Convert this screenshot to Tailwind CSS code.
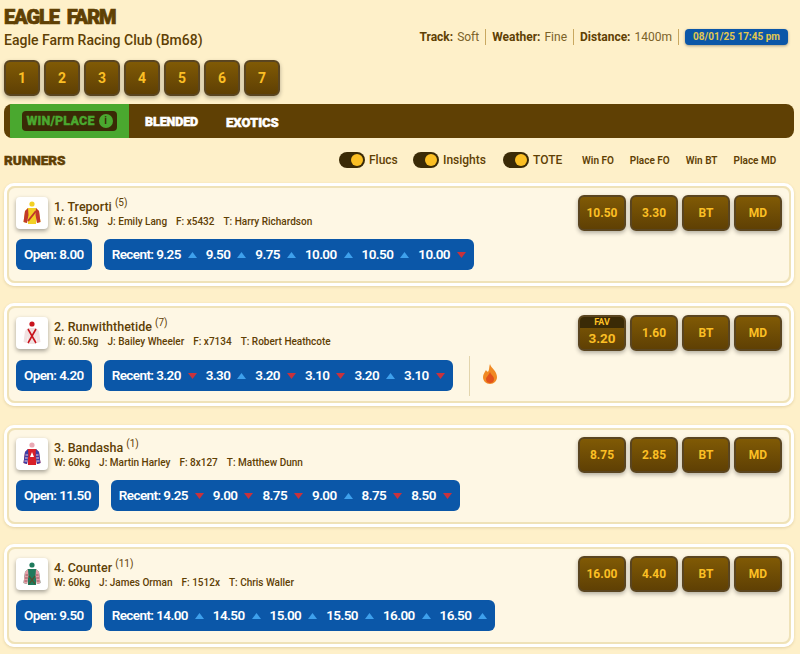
<!DOCTYPE html>
<html>
<head>
  <meta charset="utf-8" />
  <title>Eagle Farm</title>
  <script src="https://cdn.jsdelivr.net/npm/@tailwindcss/browser@4"></script>
</head>

<body class="bg-[#fef0c9] font-['Roboto',sans-serif] text-[#5f4004] overflow-hidden">
  <div class="w-[800px] h-[654px] overflow-hidden">

    <!-- Header -->
    <div class="flex justify-between pl-1 pr-3 pt-[6px]">
      <div>
        <h1 class="font-black text-[20px] leading-[22px] tracking-[-1.1px] [word-spacing:4px] [-webkit-text-stroke:0.7px_#5f4004]">EAGLE FARM</h1>
        <p class="mt-[2px] text-[14px] leading-5 font-medium">Eagle Farm Racing Club (Bm68)</p>
      </div>
      <div class="flex items-center h-4 mt-[23px] text-[12px]">
        <span class="font-bold">Track:</span><span class="ml-[4px] text-[#7b6228]">Soft</span>
        <span class="w-px h-4 bg-[#c9a860] mx-[6px]"></span>
        <span class="font-bold">Weather:</span><span class="ml-[4px] text-[#7b6228]">Fine</span>
        <span class="w-px h-4 bg-[#c9a860] mx-[6px]"></span>
        <span class="font-bold">Distance:</span><span class="ml-[4px] text-[#7b6228]">1400m</span>
        <span class="w-px h-4 bg-[#c9a860] mx-[6px]"></span>
        <span class="w-[103px] h-4 rounded bg-[#0b57a8] text-[#e3c94f] text-[10px] font-bold leading-4 text-center shadow-[0_1px_3px_rgba(0,0,0,0.35)]">08/01/25 17:45 pm</span>
      </div>
    </div>

    <!-- Race numbers -->
    <div class="flex gap-1 pl-1 mt-[10px]">
      <button class="w-9 h-9 rounded-md border-2 border-[#5a4520] bg-gradient-to-b from-[#805a05] to-[#5f4004] text-[#fbbf24] text-[14px] font-bold shadow-[0_2px_4px_rgba(0,0,0,0.3)]">1</button>
      <button class="w-9 h-9 rounded-md border-2 border-[#5a4520] bg-gradient-to-b from-[#805a05] to-[#5f4004] text-[#fbbf24] text-[14px] font-bold shadow-[0_2px_4px_rgba(0,0,0,0.3)]">2</button>
      <button class="w-9 h-9 rounded-md border-2 border-[#5a4520] bg-gradient-to-b from-[#805a05] to-[#5f4004] text-[#fbbf24] text-[14px] font-bold shadow-[0_2px_4px_rgba(0,0,0,0.3)]">3</button>
      <button class="w-9 h-9 rounded-md border-2 border-[#5a4520] bg-gradient-to-b from-[#805a05] to-[#5f4004] text-[#fbbf24] text-[14px] font-bold shadow-[0_2px_4px_rgba(0,0,0,0.3)]">4</button>
      <button class="w-9 h-9 rounded-md border-2 border-[#5a4520] bg-gradient-to-b from-[#805a05] to-[#5f4004] text-[#fbbf24] text-[14px] font-bold shadow-[0_2px_4px_rgba(0,0,0,0.3)]">5</button>
      <button class="w-9 h-9 rounded-md border-2 border-[#5a4520] bg-gradient-to-b from-[#805a05] to-[#5f4004] text-[#fbbf24] text-[14px] font-bold shadow-[0_2px_4px_rgba(0,0,0,0.3)]">6</button>
      <button class="w-9 h-9 rounded-md border-2 border-[#5a4520] bg-gradient-to-b from-[#805a05] to-[#5f4004] text-[#fbbf24] text-[14px] font-bold shadow-[0_2px_4px_rgba(0,0,0,0.3)]">7</button>
    </div>

    <!-- Tabs -->
    <div class="flex items-stretch h-[34px] mx-1 w-[790px] mt-2 rounded-lg bg-[#5f4004] pl-[6px] overflow-hidden">
      <div class="w-[119px] bg-[#4aa82f] flex items-center justify-center">
        <div class="w-[95px] h-5 rounded bg-[#3a2a06] flex items-center justify-center gap-1 text-[#4aa82f] text-[12.5px] font-black tracking-[0.2px] [-webkit-text-stroke:0.3px_#4aa82f]">
          WIN/PLACE
          <span class="w-[14px] h-[14px] rounded-full bg-[#4aa82f] text-[#3a2a06] text-[10px] leading-[14px] text-center font-bold tracking-normal [-webkit-text-stroke:0]">i</span>
        </div>
      </div>
      <div class="ml-4 pt-[3px] flex items-center text-white text-[12.5px] font-black tracking-[-0.1px] [-webkit-text-stroke:0.5px_#ffffff]">BLENDED</div>
      <div class="ml-[28px] pt-[3px] flex items-center text-white text-[13px] font-black [-webkit-text-stroke:0.5px_#ffffff]">EXOTICS</div>
    </div>

    <!-- Runners heading and toggles -->
    <div class="flex items-center h-4 mt-[14px] pl-1">
      <h2 class="w-[335px] font-black text-[13.5px] [-webkit-text-stroke:0.5px_#5f4004]">RUNNERS</h2>
      <div class="flex items-center gap-1 w-[74px]">
        <span class="relative w-[26px] h-4 rounded-full bg-[#3a2a06]"><span class="absolute right-[2px] top-[2px] w-3 h-3 rounded-full bg-[#fbbf24]"></span></span>
        <span class="text-[12px] font-medium">Flucs</span>
      </div>
      <div class="flex items-center gap-1 w-[90px]">
        <span class="relative w-[26px] h-4 rounded-full bg-[#3a2a06]"><span class="absolute right-[2px] top-[2px] w-3 h-3 rounded-full bg-[#fbbf24]"></span></span>
        <span class="text-[12px] font-medium">Insights</span>
      </div>
      <div class="flex items-center gap-1 w-[79px]">
        <span class="relative w-[26px] h-4 rounded-full bg-[#3a2a06]"><span class="absolute right-[2px] top-[2px] w-3 h-3 rounded-full bg-[#fbbf24]"></span></span>
        <span class="text-[12px] font-medium">TOTE</span>
      </div>
      <div class="flex text-[10px] font-semibold gap-[16px]">
        <span>Win FO</span><span>Place FO</span><span>Win BT</span><span>Place MD</span>
      </div>
    </div>

    <!-- Runner 1 -->
    <div class="mx-1 w-[790px] mt-[15px] h-[103px] rounded-[10px] border-[3px] border-white shadow-[0_1px_3px_rgba(120,90,20,0.2)]">
      <div class="flex justify-between h-full rounded-lg border-2 border-[#efe2b8] bg-[#fef7e4] pl-[7px] pr-[7px] pt-[7px]">
        <div>
          <div class="flex mt-[2px] gap-[6px]">
            <div class="w-8 h-8 rounded bg-white shadow-[0_2px_4px_rgba(0,0,0,0.35)] flex items-center justify-center">
              <svg width="18" height="24" viewBox="0 0 18 24"><circle cx="9" cy="3" r="2.6" fill="#f2d024"/><path d="M5 7 L13 7 L16 10 L17.5 21 L14 22 L13.5 15 L13 23 L5 23 L4.5 15 L4 22 L0.5 21 L2 10 Z" fill="#f2d024"/><path d="M5 7 L2 10 L0.5 21 L4 22 L5.5 14 Z M13 7 L16 10 L17.5 21 L14 22 L12.5 14 Z" fill="#c0392b"/><path d="M5 20 L13 10" stroke="#c0392b" stroke-width="2"/></svg>
            </div>
            <div>
              <div class="text-[12.5px] leading-4 font-medium mt-[2px]">1. Treporti <sup class="text-[10px] font-normal">(5)</sup></div>
              <div class="flex gap-[9px] text-[10px] leading-[14px] font-medium"><span>W: 61.5kg</span><span>J: Emily Lang</span><span>F: x5432</span><span>T: Harry Richardson</span></div>
            </div>
          </div>
          <div class="flex gap-3 mt-[10px]">
            <div class="h-[31px] px-2 rounded-md bg-[#0b57a8] text-white text-[13.5px] font-semibold flex items-center tracking-[-0.6px]">Open: 8.00</div>
            <div class="h-[31px] px-2 rounded-md bg-[#0b57a8] text-white text-[13.5px] font-semibold flex items-center gap-[9px] tracking-[-0.6px]">
              <span class="flex items-center gap-[7px]"><span>Recent: 9.25</span><svg width="9" height="6" viewBox="0 0 9 6"><path d="M0 6 L4.5 0 L9 6 Z" fill="#3ea0ec"/></svg></span>
              <span class="flex items-center gap-[7px]"><span>9.50</span><svg width="9" height="6" viewBox="0 0 9 6"><path d="M0 6 L4.5 0 L9 6 Z" fill="#3ea0ec"/></svg></span>
              <span class="flex items-center gap-[7px]"><span>9.75</span><svg width="9" height="6" viewBox="0 0 9 6"><path d="M0 6 L4.5 0 L9 6 Z" fill="#3ea0ec"/></svg></span>
              <span class="flex items-center gap-[7px]"><span>10.00</span><svg width="9" height="6" viewBox="0 0 9 6"><path d="M0 6 L4.5 0 L9 6 Z" fill="#3ea0ec"/></svg></span>
              <span class="flex items-center gap-[7px]"><span>10.50</span><svg width="9" height="6" viewBox="0 0 9 6"><path d="M0 6 L4.5 0 L9 6 Z" fill="#3ea0ec"/></svg></span>
              <span class="flex items-center gap-[7px]"><span>10.00</span><svg width="9" height="6" viewBox="0 0 9 6"><path d="M0 0 L9 0 L4.5 6 Z" fill="#c8323c"/></svg></span>
            </div>
          </div>
        </div>
        <div class="flex gap-1">
          <button class="w-12 h-9 rounded-md border-2 border-[#5a4520] bg-gradient-to-b from-[#805a05] to-[#5f4004] text-[#fbbf24] text-[12px] font-bold shadow-[0_2px_4px_rgba(0,0,0,0.3)]">10.50</button>
          <button class="w-12 h-9 rounded-md border-2 border-[#5a4520] bg-gradient-to-b from-[#805a05] to-[#5f4004] text-[#fbbf24] text-[12px] font-bold shadow-[0_2px_4px_rgba(0,0,0,0.3)]">3.30</button>
          <button class="w-12 h-9 rounded-md border-2 border-[#5a4520] bg-gradient-to-b from-[#805a05] to-[#5f4004] text-[#fbbf24] text-[12px] font-bold shadow-[0_2px_4px_rgba(0,0,0,0.3)]">BT</button>
          <button class="w-12 h-9 rounded-md border-2 border-[#5a4520] bg-gradient-to-b from-[#805a05] to-[#5f4004] text-[#fbbf24] text-[12px] font-bold shadow-[0_2px_4px_rgba(0,0,0,0.3)]">MD</button>
        </div>
      </div>
    </div>

    <!-- Runner 2 -->
    <div class="mx-1 w-[790px] mt-[17px] h-[103px] rounded-[10px] border-[3px] border-white shadow-[0_1px_3px_rgba(120,90,20,0.2)]">
      <div class="flex justify-between h-full rounded-lg border-2 border-[#efe2b8] bg-[#fef7e4] pl-[7px] pr-[7px] pt-[7px]">
        <div>
          <div class="flex mt-[2px] gap-[6px]">
            <div class="w-8 h-8 rounded bg-white shadow-[0_2px_4px_rgba(0,0,0,0.35)] flex items-center justify-center">
              <svg width="18" height="24" viewBox="0 0 18 24"><circle cx="9" cy="3" r="2.6" fill="#c8141e"/><path d="M5 7 L13 7 L16 10 L17.5 21 L14 22 L13.5 15 L13 23 L5 23 L4.5 15 L4 22 L0.5 21 L2 10 Z" fill="#f1e2e2"/><path d="M5 8 L13 22 M13 8 L5 22" stroke="#c8141e" stroke-width="1.6"/></svg>
            </div>
            <div>
              <div class="text-[12.5px] leading-4 font-medium mt-[2px]">2. Runwiththetide <sup class="text-[10px] font-normal">(7)</sup></div>
              <div class="flex gap-[9px] text-[10px] leading-[14px] font-medium"><span>W: 60.5kg</span><span>J: Bailey Wheeler</span><span>F: x7134</span><span>T: Robert Heathcote</span></div>
            </div>
          </div>
          <div class="flex items-center gap-3 mt-[11px]">
            <div class="h-[31px] px-2 rounded-md bg-[#0b57a8] text-white text-[13.5px] font-semibold flex items-center tracking-[-0.6px]">Open: 4.20</div>
            <div class="h-[31px] px-2 rounded-md bg-[#0b57a8] text-white text-[13.5px] font-semibold flex items-center gap-[9px] tracking-[-0.6px]">
              <span class="flex items-center gap-[7px]"><span>Recent: 3.20</span><svg width="9" height="6" viewBox="0 0 9 6"><path d="M0 0 L9 0 L4.5 6 Z" fill="#c8323c"/></svg></span>
              <span class="flex items-center gap-[7px]"><span>3.30</span><svg width="9" height="6" viewBox="0 0 9 6"><path d="M0 6 L4.5 0 L9 6 Z" fill="#3ea0ec"/></svg></span>
              <span class="flex items-center gap-[7px]"><span>3.20</span><svg width="9" height="6" viewBox="0 0 9 6"><path d="M0 0 L9 0 L4.5 6 Z" fill="#c8323c"/></svg></span>
              <span class="flex items-center gap-[7px]"><span>3.10</span><svg width="9" height="6" viewBox="0 0 9 6"><path d="M0 0 L9 0 L4.5 6 Z" fill="#c8323c"/></svg></span>
              <span class="flex items-center gap-[7px]"><span>3.20</span><svg width="9" height="6" viewBox="0 0 9 6"><path d="M0 6 L4.5 0 L9 6 Z" fill="#3ea0ec"/></svg></span>
              <span class="flex items-center gap-[7px]"><span>3.10</span><svg width="9" height="6" viewBox="0 0 9 6"><path d="M0 0 L9 0 L4.5 6 Z" fill="#c8323c"/></svg></span>
            </div>
            <div class="w-px h-10 -my-[5px] bg-[#e3d5ad] ml-[4px]"></div>
            <svg class="-mt-[4px]" width="16" height="20" viewBox="0 0 16 20"><path d="M8 0 C9 4 15 7 15 13 C15 17 12 20 8 20 C4 20 1 17 1 13 C1 10 3 8 4 6 C5 8 6 8 6.5 7 C7.5 5 7 2 8 0 Z" fill="#f08a24"/><path d="M8 8 C9 11 12 12 12 15 C12 18 10 19 8 19 C6 19 4 18 4 15 C4 13 7 11 8 8 Z" fill="#e2521c"/></svg>
          </div>
        </div>
        <div class="flex gap-1">
          <div class="w-12 h-9 rounded-md overflow-hidden border-2 border-[#5a4520] bg-gradient-to-b from-[#805a05] to-[#5f4004] text-[#fbbf24] text-center shadow-[0_2px_4px_rgba(0,0,0,0.3)]">
            <div class="h-[11px] bg-[#3a2a06] text-[9px] leading-[10px] font-bold">FAV</div>
            <div class="text-[13.5px] leading-[20px] font-bold">3.20</div>
          </div>
          <button class="w-12 h-9 rounded-md border-2 border-[#5a4520] bg-gradient-to-b from-[#805a05] to-[#5f4004] text-[#fbbf24] text-[12px] font-bold shadow-[0_2px_4px_rgba(0,0,0,0.3)]">1.60</button>
          <button class="w-12 h-9 rounded-md border-2 border-[#5a4520] bg-gradient-to-b from-[#805a05] to-[#5f4004] text-[#fbbf24] text-[12px] font-bold shadow-[0_2px_4px_rgba(0,0,0,0.3)]">BT</button>
          <button class="w-12 h-9 rounded-md border-2 border-[#5a4520] bg-gradient-to-b from-[#805a05] to-[#5f4004] text-[#fbbf24] text-[12px] font-bold shadow-[0_2px_4px_rgba(0,0,0,0.3)]">MD</button>
        </div>
      </div>
    </div>

    <!-- Runner 3 -->
    <div class="mx-1 w-[790px] mt-[19px] h-[102px] rounded-[10px] border-[3px] border-white shadow-[0_1px_3px_rgba(120,90,20,0.2)]">
      <div class="flex justify-between h-full rounded-lg border-2 border-[#efe2b8] bg-[#fef7e4] pl-[7px] pr-[7px] pt-[7px]">
        <div>
          <div class="flex mt-[1px] gap-[6px]">
            <div class="w-8 h-8 rounded bg-white shadow-[0_2px_4px_rgba(0,0,0,0.35)] flex items-center justify-center">
              <svg width="18" height="24" viewBox="0 0 18 24"><circle cx="9" cy="3" r="2.6" fill="#e9a9b4"/><path d="M5 7 L13 7 L16 10 L17.5 21 L14 22 L13.5 15 L13 23 L5 23 L4.5 15 L4 22 L0.5 21 L2 10 Z" fill="#d8202a"/><path d="M5 7 L2 10 L0.5 21 L4 22 L5.5 14 Z M13 7 L16 10 L17.5 21 L14 22 L12.5 14 Z" fill="#3a3fa8"/><path d="M2.5 13 L5 13 M2 16 L4.8 16 M1.5 19 L4.3 19 M13 13 L15.5 13 M13.2 16 L16 16 M13.7 19 L16.5 19" stroke="#f4c9d2" stroke-width="1"/><path d="M9 10 L11 15 L7 15 Z" fill="#fff"/></svg>
            </div>
            <div>
              <div class="text-[12.5px] leading-4 font-medium mt-[2px]">3. Bandasha <sup class="text-[10px] font-normal">(1)</sup></div>
              <div class="flex gap-[9px] text-[10px] leading-[14px] font-medium"><span>W: 60kg</span><span>J: Martin Harley</span><span>F: 8x127</span><span>T: Matthew Dunn</span></div>
            </div>
          </div>
          <div class="flex gap-3 mt-[10px]">
            <div class="h-[31px] px-2 rounded-md bg-[#0b57a8] text-white text-[13.5px] font-semibold flex items-center tracking-[-0.6px]">Open: 11.50</div>
            <div class="h-[31px] px-2 rounded-md bg-[#0b57a8] text-white text-[13.5px] font-semibold flex items-center gap-[9px] tracking-[-0.6px]">
              <span class="flex items-center gap-[7px]"><span>Recent: 9.25</span><svg width="9" height="6" viewBox="0 0 9 6"><path d="M0 0 L9 0 L4.5 6 Z" fill="#c8323c"/></svg></span>
              <span class="flex items-center gap-[7px]"><span>9.00</span><svg width="9" height="6" viewBox="0 0 9 6"><path d="M0 0 L9 0 L4.5 6 Z" fill="#c8323c"/></svg></span>
              <span class="flex items-center gap-[7px]"><span>8.75</span><svg width="9" height="6" viewBox="0 0 9 6"><path d="M0 0 L9 0 L4.5 6 Z" fill="#c8323c"/></svg></span>
              <span class="flex items-center gap-[7px]"><span>9.00</span><svg width="9" height="6" viewBox="0 0 9 6"><path d="M0 6 L4.5 0 L9 6 Z" fill="#3ea0ec"/></svg></span>
              <span class="flex items-center gap-[7px]"><span>8.75</span><svg width="9" height="6" viewBox="0 0 9 6"><path d="M0 0 L9 0 L4.5 6 Z" fill="#c8323c"/></svg></span>
              <span class="flex items-center gap-[7px]"><span>8.50</span><svg width="9" height="6" viewBox="0 0 9 6"><path d="M0 0 L9 0 L4.5 6 Z" fill="#c8323c"/></svg></span>
            </div>
          </div>
        </div>
        <div class="flex gap-1">
          <button class="w-12 h-9 rounded-md border-2 border-[#5a4520] bg-gradient-to-b from-[#805a05] to-[#5f4004] text-[#fbbf24] text-[12px] font-bold shadow-[0_2px_4px_rgba(0,0,0,0.3)]">8.75</button>
          <button class="w-12 h-9 rounded-md border-2 border-[#5a4520] bg-gradient-to-b from-[#805a05] to-[#5f4004] text-[#fbbf24] text-[12px] font-bold shadow-[0_2px_4px_rgba(0,0,0,0.3)]">2.85</button>
          <button class="w-12 h-9 rounded-md border-2 border-[#5a4520] bg-gradient-to-b from-[#805a05] to-[#5f4004] text-[#fbbf24] text-[12px] font-bold shadow-[0_2px_4px_rgba(0,0,0,0.3)]">BT</button>
          <button class="w-12 h-9 rounded-md border-2 border-[#5a4520] bg-gradient-to-b from-[#805a05] to-[#5f4004] text-[#fbbf24] text-[12px] font-bold shadow-[0_2px_4px_rgba(0,0,0,0.3)]">MD</button>
        </div>
      </div>
    </div>

    <!-- Runner 4 -->
    <div class="mx-1 w-[790px] mt-[17px] h-[103px] rounded-[10px] border-[3px] border-white shadow-[0_1px_3px_rgba(120,90,20,0.2)]">
      <div class="flex justify-between h-full rounded-lg border-2 border-[#efe2b8] bg-[#fef7e4] pl-[7px] pr-[7px] pt-[7px]">
        <div>
          <div class="flex mt-[2px] gap-[6px]">
            <div class="w-8 h-8 rounded bg-white shadow-[0_2px_4px_rgba(0,0,0,0.35)] flex items-center justify-center">
              <svg width="18" height="24" viewBox="0 0 18 24"><circle cx="9" cy="3" r="2.6" fill="#1f7a5c"/><path d="M5 7 L13 7 L16 10 L17.5 21 L14 22 L13.5 15 L13 23 L5 23 L4.5 15 L4 22 L0.5 21 L2 10 Z" fill="#1f7a5c"/><path d="M5 7 L2 10 L0.5 21 L4 22 L5.5 14 Z M13 7 L16 10 L17.5 21 L14 22 L12.5 14 Z" fill="#e4a0a8"/><path d="M2.5 13 L5 13 M2 16 L4.8 16 M1.5 19 L4.3 19 M13 13 L15.5 13 M13.2 16 L16 16 M13.7 19 L16.5 19" stroke="#8a3b45" stroke-width="0.8"/><path d="M6 14 L12 22 M12 14 L6 22" stroke="#5b4a2a" stroke-width="1.2"/></svg>
            </div>
            <div>
              <div class="text-[12.5px] leading-4 font-medium mt-[2px]">4. Counter <sup class="text-[10px] font-normal">(11)</sup></div>
              <div class="flex gap-[9px] text-[10px] leading-[14px] font-medium"><span>W: 60kg</span><span>J: James Orman</span><span>F: 1512x</span><span>T: Chris Waller</span></div>
            </div>
          </div>
          <div class="flex gap-3 mt-[10px]">
            <div class="h-[31px] px-2 rounded-md bg-[#0b57a8] text-white text-[13.5px] font-semibold flex items-center tracking-[-0.6px]">Open: 9.50</div>
            <div class="h-[31px] px-2 rounded-md bg-[#0b57a8] text-white text-[13.5px] font-semibold flex items-center gap-[9px] tracking-[-0.6px]">
              <span class="flex items-center gap-[7px]"><span>Recent: 14.00</span><svg width="9" height="6" viewBox="0 0 9 6"><path d="M0 6 L4.5 0 L9 6 Z" fill="#3ea0ec"/></svg></span>
              <span class="flex items-center gap-[7px]"><span>14.50</span><svg width="9" height="6" viewBox="0 0 9 6"><path d="M0 6 L4.5 0 L9 6 Z" fill="#3ea0ec"/></svg></span>
              <span class="flex items-center gap-[7px]"><span>15.00</span><svg width="9" height="6" viewBox="0 0 9 6"><path d="M0 6 L4.5 0 L9 6 Z" fill="#3ea0ec"/></svg></span>
              <span class="flex items-center gap-[7px]"><span>15.50</span><svg width="9" height="6" viewBox="0 0 9 6"><path d="M0 6 L4.5 0 L9 6 Z" fill="#3ea0ec"/></svg></span>
              <span class="flex items-center gap-[7px]"><span>16.00</span><svg width="9" height="6" viewBox="0 0 9 6"><path d="M0 6 L4.5 0 L9 6 Z" fill="#3ea0ec"/></svg></span>
              <span class="flex items-center gap-[7px]"><span>16.50</span><svg width="9" height="6" viewBox="0 0 9 6"><path d="M0 6 L4.5 0 L9 6 Z" fill="#3ea0ec"/></svg></span>
            </div>
          </div>
        </div>
        <div class="flex gap-1">
          <button class="w-12 h-9 rounded-md border-2 border-[#5a4520] bg-gradient-to-b from-[#805a05] to-[#5f4004] text-[#fbbf24] text-[12px] font-bold shadow-[0_2px_4px_rgba(0,0,0,0.3)]">16.00</button>
          <button class="w-12 h-9 rounded-md border-2 border-[#5a4520] bg-gradient-to-b from-[#805a05] to-[#5f4004] text-[#fbbf24] text-[12px] font-bold shadow-[0_2px_4px_rgba(0,0,0,0.3)]">4.40</button>
          <button class="w-12 h-9 rounded-md border-2 border-[#5a4520] bg-gradient-to-b from-[#805a05] to-[#5f4004] text-[#fbbf24] text-[12px] font-bold shadow-[0_2px_4px_rgba(0,0,0,0.3)]">BT</button>
          <button class="w-12 h-9 rounded-md border-2 border-[#5a4520] bg-gradient-to-b from-[#805a05] to-[#5f4004] text-[#fbbf24] text-[12px] font-bold shadow-[0_2px_4px_rgba(0,0,0,0.3)]">MD</button>
        </div>
      </div>
    </div>

  </div>
</body>
</html>
